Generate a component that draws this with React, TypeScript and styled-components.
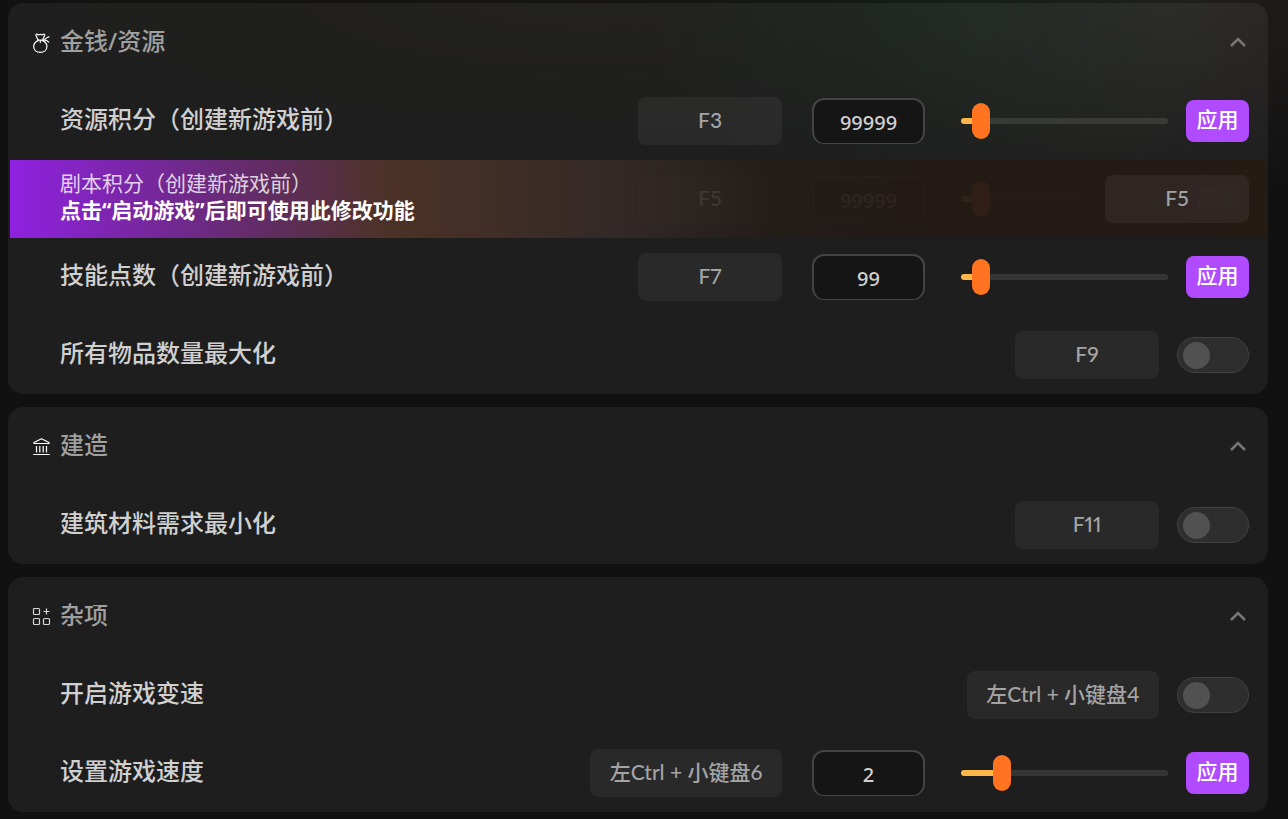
import React, { useState } from "react";
import styled, { createGlobalStyle } from "styled-components";

const GlobalStyle = createGlobalStyle`
  *, *::before, *::after { box-sizing: border-box; }
  html { background: #111111; }
  body {
    margin: 0;
    font-family: "Noto Sans", "Noto Sans CJK SC", sans-serif;
    color: #d0d0d0;
  }
  button, input { font: inherit; color: inherit; margin: 0; }
`;

const Page = styled.main`
  display: flex;
  flex-direction: column;
  gap: 13px;
  padding: 3px 20px 7px 8px;
  background:
    radial-gradient(ellipse 320px 210px at 74% 0, rgba(22, 38, 26, 0.5), transparent),
    radial-gradient(ellipse 320px 200px at 91% 0, rgba(40, 36, 34, 0.75), transparent),
    radial-gradient(ellipse 640px 150px at 46% 0, rgba(30, 28, 20, 0.4), transparent),
    #111111;
`;

const Card = styled.section`
  padding-top: 1px;
  border-radius: 15px;
  background: rgba(255, 255, 255, 0.055);
`;

const Header = styled.header`
  display: flex;
  align-items: center;
  gap: 8px;
  height: 78px;
  padding: 0 18px 0 24px;
`;

const Title = styled.h2`
  flex: 1;
  margin: 0;
  padding-bottom: 4px;
  font-size: 24px;
  line-height: 32px;
  font-weight: 500;
  color: #a0a0a0;
`;

const Collapse = styled.button`
  display: flex;
  align-items: center;
  justify-content: center;
  width: 24px;
  height: 24px;
  padding: 0 0 2px;
  border: 0;
  background: none;
  color: #777777;
`;

const Row = styled.div`
  position: relative;
  display: flex;
  align-items: center;
  height: 78px;
  padding: 0 19px 0 52px;
`;

const Label = styled.span`
  flex: 1;
  padding-bottom: 4px;
  font-size: 24px;
  line-height: 32px;
  font-weight: 500;
  color: #d0d0d0;
`;

const Controls = styled.div`
  display: flex;
  align-items: center;
  gap: 18px;
  margin-left: auto;
`;

const Hotkey = styled.button<{ $wide?: boolean }>`
  min-width: ${(p) => (p.$wide ? 192 : 144)}px;
  height: 48px;
  padding: 0 12px 3px;
  border: 0;
  border-radius: 8px;
  background: rgba(255, 255, 255, 0.05);
  font-family: Lato, "Noto Sans CJK SC", sans-serif;
  font-size: 21px;
  line-height: 28px;
  font-weight: 500;
  font-variant-numeric: proportional-nums;
  white-space: nowrap;
  color: #a4a4a4;
`;

const NumberBox = styled.input`
  width: 113px;
  height: 46px;
  margin: 0 18px 0 12px;
  padding: 2px 8px 0;
  border: 2px solid #444444;
  border-bottom-width: 1px;
  border-radius: 12px;
  background: #151515;
  font-size: 20px;
  line-height: 28px;
  font-weight: 500;
  text-align: center;
  outline: none;
`;

const Slider = styled.input`
  appearance: none;
  width: 207px;
  height: 36px;
  background: none;
  outline: none;

  &::-webkit-slider-runnable-track {
    height: 6px;
    border-radius: 3px;
    background: linear-gradient(
      to right,
      #ffb74a var(--fill),
      rgba(255, 255, 255, 0.1) var(--fill)
    );
  }

  &::-webkit-slider-thumb {
    appearance: none;
    width: 18px;
    height: 36px;
    margin-top: -15px;
    border-radius: 9px;
    background: #ff7321;
  }
`;

const Apply = styled.button`
  width: 63px;
  height: 42px;
  padding: 0 0 4px;
  border: 0;
  border-radius: 8px;
  background: #b14bff;
  font-size: 21px;
  line-height: 28px;
  font-weight: 500;
  white-space: nowrap;
  color: #ffffff;
`;

const Toggle = styled.input`
  appearance: none;
  display: flex;
  align-items: center;
  width: 72px;
  height: 36px;
  padding: 0 5px;
  border: 1px solid #414141;
  border-radius: 18px;
  background: #2e2e2e;

  &::before {
    content: "";
    width: 27px;
    height: 27px;
    border-radius: 50%;
    background: #515151;
  }

  &:checked::before {
    margin-left: auto;
    background: #b14bff;
  }
`;

const Notice = styled.div`
  position: absolute;
  inset: 0 1px 0 2px;
  display: flex;
  align-items: center;
  justify-content: space-between;
  padding: 0 18px 0 50px;
  background: linear-gradient(
    to right,
    #8f21e2 0%,
    #4c3226 30%,
    rgba(55, 43, 40, 0.85) 48%,
    rgba(42, 34, 30, 0.84) 56%,
    rgba(35, 28, 23, 0.94) 61%,
    rgba(36, 26, 22, 0.95) 77%,
    rgba(36, 26, 22, 0.98) 92%,
    rgba(35, 27, 20, 0.99) 100%
  );
`;

const NoticeText = styled.p<{ $strong?: boolean }>`
  margin: 0;
  font-size: 21px;
  line-height: 27px;
  font-weight: ${(p) => (p.$strong ? 700 : 400)};
  color: ${(p) => (p.$strong ? "#ffffff" : "rgba(255, 255, 255, 0.8)")};
`;

const NoticeBody = styled.div`
  padding-bottom: 4px;
`;

const MoneyIcon = () => (
  <svg width="20" height="22" viewBox="0 0 20 22" fill="none" stroke="#ffffff" strokeWidth="1.2" strokeLinecap="round" strokeLinejoin="round" aria-hidden="true">
    <path d="M6 8.600C3.400 9.800 1.700 11.800 1.700 14.400C1.700 18 4.500 20.300 8.300 20.300S14.900 18 14.900 14.400C14.900 11.800 13.200 9.800 10.600 8.600" />
    <path d="M5.900 7.800L3.900 3.200C3.700 2.200 4.600 1.700 5.400 2.200L6.600 3L8.300 2.300L10 3L11.200 2.200C12 1.700 12.900 2.200 12.700 3.200L10.700 7.800" />
    <path d="M5.400 8.200H12M12 8C13.400 7.400 14.300 5.300 17 4.900M12 8.200C13.800 8.100 15.400 8.800 16.800 10.200M8.300 8.500V10.500" />
  </svg>
);

const BuildingIcon = () => (
  <svg width="20" height="22" viewBox="0 0 20 22" fill="none" stroke="#ffffff" strokeWidth="1.2" strokeLinejoin="round" aria-hidden="true">
    <path d="M2 7.500V6.500L9.500 2.700L17 6.500V7.500Z" />
    <path d="M4.500 10V16.500M7.800 10V16.500M11.200 10V16.500M14.500 10V16.500M1.200 18.500H17.800" />
  </svg>
);

const MiscIcon = () => (
  <svg width="20" height="22" viewBox="0 0 20 22" fill="none" stroke="#d8d8d8" strokeWidth="1.2" aria-hidden="true">
    <rect x="1.500" y="2.500" width="6" height="6" rx="1" />
    <rect x="1.500" y="12.500" width="6" height="6" rx="1" />
    <rect x="11.500" y="12.500" width="6" height="6" rx="1" />
    <path d="M14.500 2.500V8.500M11.500 5.500H17.500" />
  </svg>
);

const Chevron = () => (
  <svg width="18" height="12" viewBox="0 0 18 12" fill="none" stroke="currentColor" strokeWidth="2.5" aria-hidden="true">
    <path d="M2 10L9 3L16 10" />
  </svg>
);

type GroupProps = { icon: React.ReactNode; title: string; children: React.ReactNode };

const Group = ({ icon, title, children }: GroupProps) => {
  const [open, setOpen] = useState(true);
  return (
    <Card>
      <Header>
        {icon}
        <Title>{title}</Title>
        <Collapse type="button" aria-label={title} aria-expanded={open} onClick={() => setOpen(!open)}>
          <Chevron />
        </Collapse>
      </Header>
      {open && children}
    </Card>
  );
};

type ValueProps = {
  name: string;
  hotkey: string;
  wide?: boolean;
  initial: number;
  min?: number;
  max: number;
};

const ValueControls = ({ name, hotkey, wide, initial, min = 0, max }: ValueProps) => {
  const [value, setValue] = useState(initial);
  const fill = ((value - min) / (max - min)) * 100;
  const change = (e: React.ChangeEvent<HTMLInputElement>) => setValue(Number(e.target.value) || 0);
  return (
    <Controls>
      <Hotkey type="button" $wide={wide}>{hotkey}</Hotkey>
      <NumberBox type="text" inputMode="numeric" aria-label={name} value={value} onChange={change} />
      <Slider
        type="range"
        aria-label={name}
        min={min}
        max={max}
        value={value}
        onChange={change}
        style={{ "--fill": `calc(9px + (100% - 18px) * ${fill / 100})` } as React.CSSProperties}
      />
      <Apply type="button">应用</Apply>
    </Controls>
  );
};

const ValueRow = (props: ValueProps) => (
  <Row>
    <Label>{props.name}</Label>
    <ValueControls {...props} />
  </Row>
);

const ToggleRow = ({ name, hotkey, wide }: { name: string; hotkey: string; wide?: boolean }) => (
  <Row>
    <Label>{name}</Label>
    <Controls>
      <Hotkey type="button" $wide={wide}>{hotkey}</Hotkey>
      <Toggle type="checkbox" role="switch" aria-label={name} />
    </Controls>
  </Row>
);

const LockedRow = (props: ValueProps) => (
  <Row>
    <ValueControls {...props} />
    <Notice>
      <NoticeBody>
        <NoticeText>{props.name}</NoticeText>
        <NoticeText $strong>点击“启动游戏”后即可使用此修改功能</NoticeText>
      </NoticeBody>
      <Hotkey type="button">{props.hotkey}</Hotkey>
    </Notice>
  </Row>
);

export default function App() {
  return (
    <>
      <GlobalStyle />
      <Page>
        <Group icon={<MoneyIcon />} title="金钱/资源">
          <ValueRow name="资源积分（创建新游戏前）" hotkey="F3" initial={99999} max={1700000} />
          <LockedRow name="剧本积分（创建新游戏前）" hotkey="F5" initial={99999} max={1700000} />
          <ValueRow name="技能点数（创建新游戏前）" hotkey="F7" initial={99} max={1700} />
          <ToggleRow name="所有物品数量最大化" hotkey="F9" />
        </Group>
        <Group icon={<BuildingIcon />} title="建造">
          <ToggleRow name="建筑材料需求最小化" hotkey="F11" />
        </Group>
        <Group icon={<MiscIcon />} title="杂项">
          <ToggleRow name="开启游戏变速" hotkey="左Ctrl + 小键盘4" wide />
          <ValueRow name="设置游戏速度" hotkey="左Ctrl + 小键盘6" wide initial={2} max={12} />
        </Group>
      </Page>
    </>
  );
}
